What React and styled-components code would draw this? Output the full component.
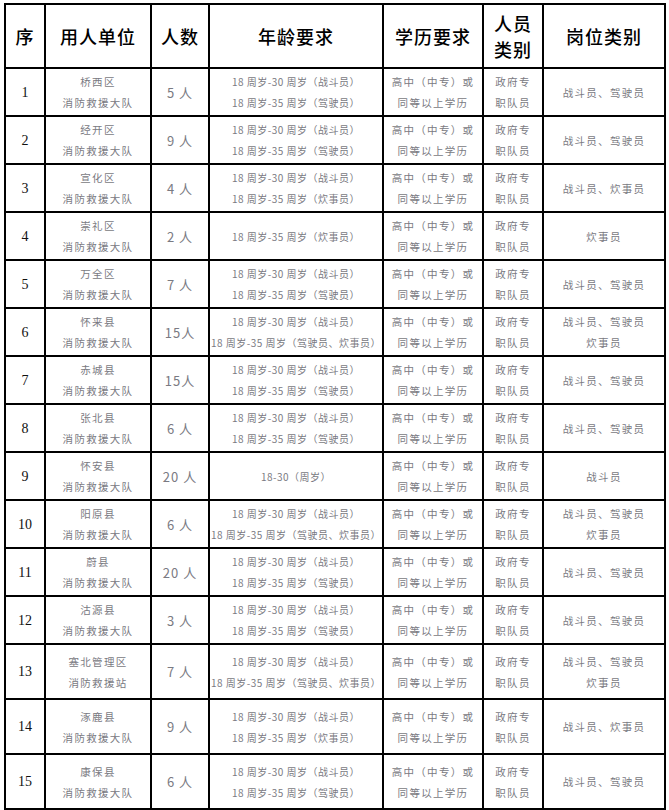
import React from "react";
import styled, { createGlobalStyle } from "styled-components";

const GlobalStyle = createGlobalStyle`
  body {
    margin: 0;
    background: #fff;
  }
`;

const Page = styled.div`
  padding: 3px 0 0 4px;
`;

const Table = styled.table`
  border-collapse: collapse;
  table-layout: fixed;
  width: 660px;
  font-family: "Noto Sans CJK SC", "Noto Sans", sans-serif;
`;

const Th = styled.th`
  border: 2px solid #000;
  height: 62px;
  padding: 0;
  font-size: 18px;
  font-weight: 500;
  line-height: 26px;
  letter-spacing: 1px;
  color: #000;
  text-align: center;
  vertical-align: middle;
`;

const Td = styled.td`
  border: 2px solid #000;
  padding: 0;
  height: ${(p) => (p.$tall ? 53 : 46)}px;
  text-align: center;
  vertical-align: middle;
  color: #7a7a82;
  font-size: 10.5px;
  line-height: 21px;
  letter-spacing: 1.3px;
  white-space: nowrap;
`;

const NumCell = styled(Td)`
  font-family: "Liberation Serif", serif;
  font-size: 14px;
  letter-spacing: 0;
  color: #111;
`;

const CountCell = styled(Td)`
  font-size: 13px;
  letter-spacing: 1px;
`;

const AgeCell = styled(Td)`
  font-size: 10px;
  letter-spacing: 0.5px;
`;

const Line = styled.div``;

const rows = [
  ["桥西区", "消防救援大队", "5 人", ["18 周岁-30 周岁（战斗员）", "18 周岁-35 周岁（驾驶员）"], ["战斗员、驾驶员"]],
  ["经开区", "消防救援大队", "9 人", ["18 周岁-30 周岁（战斗员）", "18 周岁-35 周岁（驾驶员）"], ["战斗员、驾驶员"]],
  ["宣化区", "消防救援大队", "4 人", ["18 周岁-30 周岁（战斗员）", "18 周岁-35 周岁（炊事员）"], ["战斗员、炊事员"]],
  ["崇礼区", "消防救援大队", "2 人", ["18 周岁-35 周岁（炊事员）"], ["炊事员"]],
  ["万全区", "消防救援大队", "7 人", ["18 周岁-30 周岁（战斗员）", "18 周岁-35 周岁（驾驶员）"], ["战斗员、驾驶员"]],
  ["怀来县", "消防救援大队", "15人", ["18 周岁-30 周岁（战斗员）", "18 周岁-35 周岁（驾驶员、炊事员）"], ["战斗员、驾驶员", "炊事员"]],
  ["赤城县", "消防救援大队", "15人", ["18 周岁-30 周岁（战斗员）", "18 周岁-35 周岁（驾驶员）"], ["战斗员、驾驶员"]],
  ["张北县", "消防救援大队", "6 人", ["18 周岁-30 周岁（战斗员）", "18 周岁-35 周岁（驾驶员）"], ["战斗员、驾驶员"]],
  ["怀安县", "消防救援大队", "20 人", ["18-30（周岁）"], ["战斗员"]],
  ["阳原县", "消防救援大队", "6 人", ["18 周岁-30 周岁（战斗员）", "18 周岁-35 周岁（驾驶员、炊事员）"], ["战斗员、驾驶员", "炊事员"]],
  ["蔚县", "消防救援大队", "20 人", ["18 周岁-30 周岁（战斗员）", "18 周岁-35 周岁（驾驶员）"], ["战斗员、驾驶员"]],
  ["沽源县", "消防救援大队", "3 人", ["18 周岁-30 周岁（战斗员）", "18 周岁-35 周岁（驾驶员）"], ["战斗员、驾驶员"]],
  ["塞北管理区", "消防救援站", "7 人", ["18 周岁-30 周岁（战斗员）", "18 周岁-35 周岁（驾驶员、炊事员）"], ["战斗员、驾驶员", "炊事员"]],
  ["涿鹿县", "消防救援大队", "9 人", ["18 周岁-30 周岁（战斗员）", "18 周岁-35 周岁（炊事员）"], ["战斗员、炊事员"]],
  ["康保县", "消防救援大队", "6 人", ["18 周岁-30 周岁（战斗员）", "18 周岁-35 周岁（驾驶员）"], ["战斗员、驾驶员"]],
];

const widths = [40, 106, 58, 174, 100, 60, 122];

const App = () => (
  <Page>
    <GlobalStyle />
    <Table>
      <colgroup>
        {widths.map((w, i) => (
          <col key={i} style={{ width: w }} />
        ))}
      </colgroup>
      <thead>
        <tr>
          <Th>序</Th>
          <Th>用人单位</Th>
          <Th>人数</Th>
          <Th>年龄要求</Th>
          <Th>学历要求</Th>
          <Th>
            <Line>人员</Line>
            <Line>类别</Line>
          </Th>
          <Th>岗位类别</Th>
        </tr>
      </thead>
      <tbody>
        {rows.map(([area, unit, count, ages, posts], idx) => {
          const tall = idx >= 12;
          return (
            <tr key={idx}>
              <NumCell $tall={tall}>{idx + 1}</NumCell>
              <Td $tall={tall}>
                <Line>{area}</Line>
                <Line>{unit}</Line>
              </Td>
              <CountCell $tall={tall}>{count}</CountCell>
              <AgeCell $tall={tall}>
                {ages.map((a) => (
                  <Line key={a}>{a}</Line>
                ))}
              </AgeCell>
              <Td $tall={tall}>
                <Line>高中（中专）或</Line>
                <Line>同等以上学历</Line>
              </Td>
              <Td $tall={tall}>
                <Line>政府专</Line>
                <Line>职队员</Line>
              </Td>
              <Td $tall={tall}>
                {posts.map((p) => (
                  <Line key={p}>{p}</Line>
                ))}
              </Td>
            </tr>
          );
        })}
      </tbody>
    </Table>
  </Page>
);

export default App;
